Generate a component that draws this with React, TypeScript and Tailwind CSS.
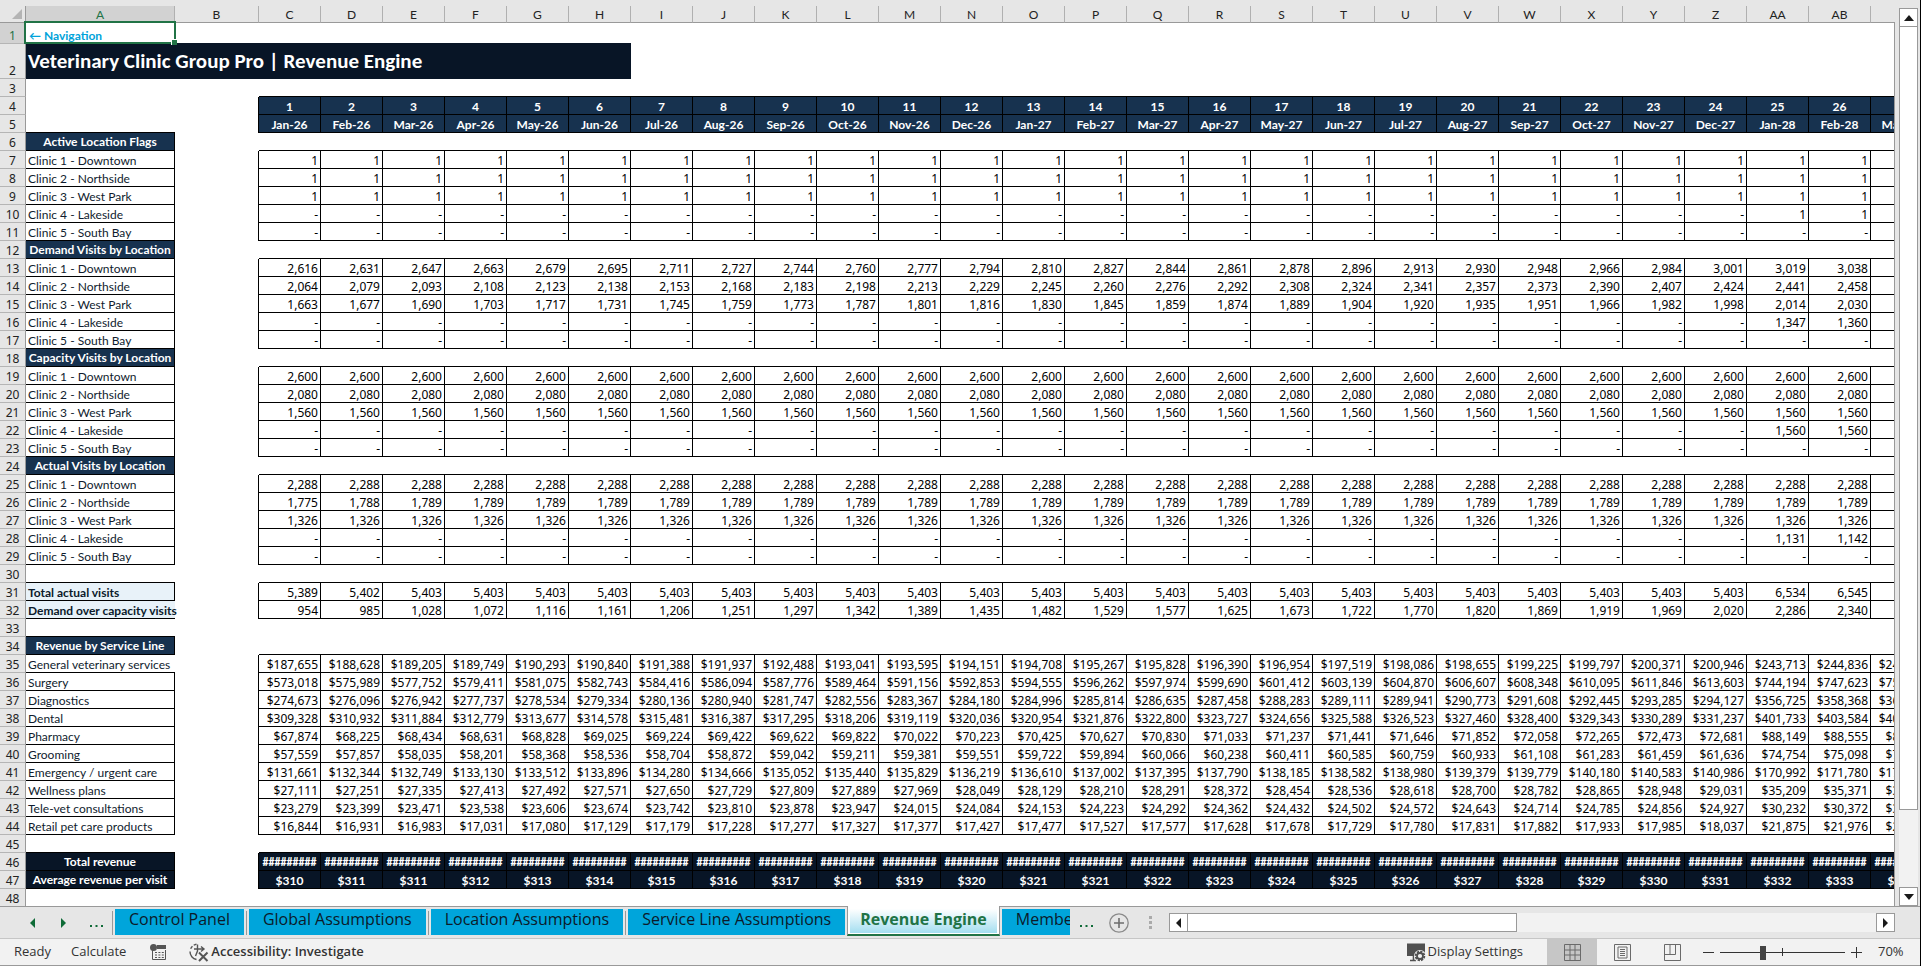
import React, { useState } from "react";

type LabelKind = "section" | "total" | "summary" | "plain";
type ValueKind = "header" | "number" | "hashes" | "average";

interface SheetRow {
  label?: string;
  labelKind?: LabelKind;
  spill?: boolean; // label runs over into column B
  values?: string[];
  valueKind?: ValueKind;
}

const COLUMNS =
  "C D E F G H I J K L M N O P Q R S T U V W X Y Z AA AB AC".split(" ");
const MONTHS = "Jan Feb Mar Apr May Jun Jul Aug Sep Oct Nov Dec".split(" ");

const list = (text: string) => text.trim().split(/\s+/);
const usd = (text: string) => list(text).map((v) => `$${v}`);
const fill = (value: string, count = 27) => Array<string>(count).fill(value);
const lateStart = (a: string, b: string, c: string) => [...fill("-", 24), a, b, c];

const clinics = (rows: string[][]): SheetRow[] =>
  ["Downtown", "Northside", "West Park", "Lakeside", "South Bay"].map(
    (name, i) => ({
      label: `Clinic ${i + 1} - ${name}`,
      labelKind: "plain",
      values: rows[i],
      valueKind: "number",
    })
  );

const section = (label: string): SheetRow => ({ label, labelKind: "section" });
const service = (label: string, values: string, spill = false): SheetRow => ({
  label,
  labelKind: "plain",
  spill,
  values: usd(values),
  valueKind: "number",
});

// Rows 3 and up, rows 1 and 2 are drawn by hand
const ROWS: SheetRow[] = [
  {},
  { values: COLUMNS.map((_, i) => String(i + 1)), valueKind: "header" },
  {
    values: COLUMNS.map((_, i) => `${MONTHS[i % 12]}-${26 + Math.floor(i / 12)}`),
    valueKind: "header",
  },
  section("Active Location Flags"),
  ...clinics([fill("1"), fill("1"), fill("1"), lateStart("1", "1", "1"), fill("-")]),
  section("Demand Visits by Location"),
  ...clinics([
    list(
      "2,616 2,631 2,647 2,663 2,679 2,695 2,711 2,727 2,744 2,760 2,777 2,794 2,810 2,827 2,844 2,861 2,878 2,896 2,913 2,930 2,948 2,966 2,984 3,001 3,019 3,038 3,056"
    ),
    list(
      "2,064 2,079 2,093 2,108 2,123 2,138 2,153 2,168 2,183 2,198 2,213 2,229 2,245 2,260 2,276 2,292 2,308 2,324 2,341 2,357 2,373 2,390 2,407 2,424 2,441 2,458 2,475"
    ),
    list(
      "1,663 1,677 1,690 1,703 1,717 1,731 1,745 1,759 1,773 1,787 1,801 1,816 1,830 1,845 1,859 1,874 1,889 1,904 1,920 1,935 1,951 1,966 1,982 1,998 2,014 2,030 2,047"
    ),
    lateStart("1,347", "1,360", "1,372"),
    fill("-"),
  ]),
  section("Capacity Visits by Location"),
  ...clinics([
    fill("2,600"),
    fill("2,080"),
    fill("1,560"),
    lateStart("1,560", "1,560", "1,560"),
    fill("-"),
  ]),
  section("Actual Visits by Location"),
  ...clinics([
    fill("2,288"),
    ["1,775", "1,788", ...fill("1,789", 25)],
    fill("1,326"),
    lateStart("1,131", "1,142", "1,153"),
    fill("-"),
  ]),
  {},
  {
    label: "Total actual visits",
    labelKind: "summary",
    values: ["5,389", "5,402", ...fill("5,403", 22), "6,534", "6,545", "6,556"],
    valueKind: "number",
  },
  {
    label: "Demand over capacity visits",
    labelKind: "summary",
    spill: true,
    values: list(
      "954 985 1,028 1,072 1,116 1,161 1,206 1,251 1,297 1,342 1,389 1,435 1,482 1,529 1,577 1,625 1,673 1,722 1,770 1,820 1,869 1,919 1,969 2,020 2,286 2,340 2,394"
    ),
    valueKind: "number",
  },
  {},
  section("Revenue by Service Line"),
  service(
    "General veterinary services",
    "187,655 188,628 189,205 189,749 190,293 190,840 191,388 191,937 192,488 193,041 193,595 194,151 194,708 195,267 195,828 196,390 196,954 197,519 198,086 198,655 199,225 199,797 200,371 200,946 243,713 244,836 245,965",
    true
  ),
  service(
    "Surgery",
    "573,018 575,989 577,752 579,411 581,075 582,743 584,416 586,094 587,776 589,464 591,156 592,853 594,555 596,262 597,974 599,690 601,412 603,139 604,870 606,607 608,348 610,095 611,846 613,603 744,194 747,623 751,068"
  ),
  service(
    "Diagnostics",
    "274,673 276,096 276,942 277,737 278,534 279,334 280,136 280,940 281,747 282,556 283,367 284,180 284,996 285,814 286,635 287,458 288,283 289,111 289,941 290,773 291,608 292,445 293,285 294,127 356,725 358,368 360,019"
  ),
  service(
    "Dental",
    "309,328 310,932 311,884 312,779 313,677 314,578 315,481 316,387 317,295 318,206 319,119 320,036 320,954 321,876 322,800 323,727 324,656 325,588 326,523 327,460 328,400 329,343 330,289 331,237 401,733 403,584 405,444"
  ),
  service(
    "Pharmacy",
    "67,874 68,225 68,434 68,631 68,828 69,025 69,224 69,422 69,622 69,822 70,022 70,223 70,425 70,627 70,830 71,033 71,237 71,441 71,646 71,852 72,058 72,265 72,473 72,681 88,149 88,555 88,963"
  ),
  service(
    "Grooming",
    "57,559 57,857 58,035 58,201 58,368 58,536 58,704 58,872 59,042 59,211 59,381 59,551 59,722 59,894 60,066 60,238 60,411 60,585 60,759 60,933 61,108 61,283 61,459 61,636 74,754 75,098 75,444"
  ),
  service(
    "Emergency / urgent care",
    "131,661 132,344 132,749 133,130 133,512 133,896 134,280 134,666 135,052 135,440 135,829 136,219 136,610 137,002 137,395 137,790 138,185 138,582 138,980 139,379 139,779 140,180 140,583 140,986 170,992 171,780 172,572"
  ),
  service(
    "Wellness plans",
    "27,111 27,251 27,335 27,413 27,492 27,571 27,650 27,729 27,809 27,889 27,969 28,049 28,129 28,210 28,291 28,372 28,454 28,536 28,618 28,700 28,782 28,865 28,948 29,031 35,209 35,371 35,534"
  ),
  service(
    "Tele-vet consultations",
    "23,279 23,399 23,471 23,538 23,606 23,674 23,742 23,810 23,878 23,947 24,015 24,084 24,153 24,223 24,292 24,362 24,432 24,502 24,572 24,643 24,714 24,785 24,856 24,927 30,232 30,372 30,512"
  ),
  service(
    "Retail pet care products",
    "16,844 16,931 16,983 17,031 17,080 17,129 17,179 17,228 17,277 17,327 17,377 17,427 17,477 17,527 17,577 17,628 17,678 17,729 17,780 17,831 17,882 17,933 17,985 18,037 21,875 21,976 22,078"
  ),
  {},
  {
    label: "Total revenue",
    labelKind: "total",
    values: fill("#########"),
    valueKind: "hashes",
  },
  {
    label: "Average revenue per visit",
    labelKind: "total",
    values: usd(
      "310 311 311 312 313 314 315 316 317 318 319 320 321 321 322 323 324 325 326 327 328 329 330 331 332 333 335"
    ),
    valueKind: "average",
  },
  {},
];

const labelClass: Record<LabelKind, string> = {
  section: "bg-[#17324f] pt-px pb-px text-center font-bold text-white",
  total: "bg-[#081526] pt-px pb-px text-center font-bold text-white",
  summary: "bg-[#e8f2f9] px-0.5 pt-0.5 font-bold text-[#0b1a2b]",
  plain: "px-0.5 pt-0.5 text-[#0f1c2e]",
};

const valueClass: Record<ValueKind, string> = {
  header: "bg-[#17324f] pt-0.5 text-center font-bold text-white",
  number:
    "px-0.5 pt-0.5 text-right font-['Noto_Sans','Open_Sans',sans-serif] text-black",
  hashes:
    "bg-[#081526] pt-0.5 text-center font-[Carlito,Lato,sans-serif] font-bold text-white",
  average: "bg-[#081526] pt-0.5 text-center font-bold text-white",
};

const RowNumber = ({ n, active }: { n: number; active?: boolean }) => (
  <th
    scope="row"
    className={`border-r border-b border-r-[#999] border-b-[#b5b5b5] pt-0.5 text-center align-bottom font-['Noto_Sans','Open_Sans',sans-serif] font-normal ${
      active ? "bg-[#d2d2d2] text-[#217346]" : "bg-[#e6e6e6] text-[#222]"
    }`}
  >
    {n}
  </th>
);

const Sheet = () => (
  <table className="w-[1933px] table-fixed border-separate border-spacing-0 bg-white font-[Lato,Carlito,sans-serif] text-[12px] leading-[15px] whitespace-nowrap">
    <colgroup>
      <col className="w-[26px]" />
      <col className="w-[149px]" />
      <col className="w-[84px]" />
      {COLUMNS.map((c) => (
        <col key={c} className="w-[62px]" />
      ))}
    </colgroup>
    <thead>
      <tr className="h-[17px] bg-[#e6e6e6] text-[#222]">
        <td className="border-r border-b border-[#999] p-0">
          <svg viewBox="0 0 10 10" className="ml-auto mr-[3px] h-[10px] w-[10px]">
            <path d="M10 0V10H0Z" fill="#b4b4b4" />
          </svg>
        </td>
        <th
          scope="col"
          className="border-r border-b border-r-[#b0b0b0] border-b-[#999] bg-[#d2d2d2] p-0 pt-px font-normal text-[#217346]"
        >
          A
        </th>
        {["B", ...COLUMNS].map((c) => (
          <th
            key={c}
            scope="col"
            className="border-r border-b border-r-[#b0b0b0] border-b-[#999] p-0 pt-px font-normal"
          >
            {c === "AC" ? "" : c}
          </th>
        ))}
      </tr>
    </thead>
    <tbody>
      <tr className="h-[21px]">
        <RowNumber n={1} active />
        <td className="relative border-b border-[#081526] px-[3px] pt-1 pb-0 align-bottom">
          <a href="#navigation" className="font-bold text-[#00a3da]">
            ← Navigation
          </a>
          <div className="absolute -top-0.5 -right-px -bottom-px -left-0.5 border-2 border-[#217346]" />
          <div className="absolute -right-0.5 -bottom-0.5 h-1.5 w-1.5 border-t border-l border-white bg-[#217346]" />
        </td>
        <td colSpan={7} className="border-b border-[#081526]" />
        <td colSpan={21} />
      </tr>
      <tr className="h-[35px]">
        <RowNumber n={2} />
        <td
          colSpan={8}
          className="bg-[#081526] px-0.5 pt-0 pb-0.5 text-left align-middle font-[Carlito,Lato,sans-serif] text-[21px] leading-[26px] font-bold text-white"
        >
          Veterinary Clinic Group Pro | Revenue Engine
        </td>
        <td colSpan={21} />
      </tr>
      {ROWS.map((row, i) => {
        const next = ROWS[i + 1] ?? {};
        return (
          <tr key={i} className="h-[18px]">
            <RowNumber n={i + 3} />
            <td
              className={`border-black ${
                row.label || next.label ? "border-b" : ""
              } ${row.label && !row.spill ? "border-r" : ""} ${
                row.labelKind ? labelClass[row.labelKind] : "p-0"
              }`}
            >
              {row.label}
            </td>
            <td className={row.values ? "border-r border-black p-0" : "p-0"} />
            {COLUMNS.map((c, j) => (
              <td
                key={c}
                className={`border-black ${
                  row.values || next.values ? "border-b" : ""
                } ${row.values ? "border-r" : ""} ${
                  row.valueKind ? valueClass[row.valueKind] : "p-0"
                }`}
              >
                {row.values?.[j]}
              </td>
            ))}
          </tr>
        );
      })}
    </tbody>
  </table>
);

const arrows = {
  up: "M6 3L11 9H1Z",
  down: "M1 3H11L6 9Z",
  left: "M9 1V11L4 6Z",
  right: "M3 1V11L8 6Z",
};

const Arrow = ({ dir, color }: { dir: keyof typeof arrows; color: string }) => (
  <svg viewBox="0 0 12 12" className="h-3 w-3">
    <path d={arrows[dir]} fill={color} />
  </svg>
);

const ScrollButton = ({ dir }: { dir: keyof typeof arrows }) => (
  <button
    aria-label={`Scroll ${dir}`}
    className="flex h-[19px] w-[19px] shrink-0 items-center justify-center border border-[#999] bg-white"
  >
    <Arrow dir={dir} color="#1a1a1a" />
  </button>
);

const TABS = [
  "Control Panel",
  "Global Assumptions",
  "Location Assumptions",
  "Service Line Assumptions",
  "Revenue Engine",
  "Membe",
];

const SheetTabs = () => {
  const [active, setActive] = useState("Revenue Engine");
  return (
    <nav className="flex h-8 shrink-0 bg-[#e6e6e6]">
      <div className="flex w-28 shrink-0 items-center border-t border-[#999] pl-[26px]">
        <button aria-label="Previous sheet" className="mr-5">
          <Arrow dir="left" color="#0e6b37" />
        </button>
        <button aria-label="Next sheet" className="mr-5">
          <Arrow dir="right" color="#0e6b37" />
        </button>
        <button aria-label="More sheets to the left">
          <Dots />
        </button>
      </div>
      {TABS.map((tab, i) =>
        tab === active ? (
          <button
            key={tab}
            className="flex h-[30px] shrink-0 flex-col border-x border-b-2 border-x-[#999] border-b-[#217346] bg-white px-0.5 pb-px text-[16px] font-bold text-[#217346]"
          >
            <span className="block h-[27px] bg-linear-to-b from-white from-10% to-[#a3def0] px-2.5 leading-[26px]">
              {tab}
            </span>
          </button>
        ) : (
          <div
            key={tab}
            className={`flex shrink-0 items-start border-t border-[#999] ${
              tab === "Membe" ? "w-[70px] overflow-hidden" : ""
            }`}
          >
            {TABS[i - 1] !== active && <span className="mt-1 h-6 w-px bg-[#999]" />}
            <button
              onClick={() => setActive(tab)}
              className="mx-0.5 mt-0.5 h-[26px] shrink-0 bg-[#00a5db] px-3.5 pb-1.5 text-[16px] leading-5 text-[#0c1a2a]"
            >
              {tab}
            </button>
          </div>
        )
      )}
      <div className="flex min-w-0 flex-1 items-center border-t border-[#999]">
        <button aria-label="More sheets to the right" className="mr-4 ml-2.5">
          <Dots />
        </button>
        <button aria-label="New sheet">
          <svg viewBox="0 0 20 20" className="h-5 w-5" fill="none">
            <circle cx="10" cy="10" r="9.2" stroke="#8a8a8a" strokeWidth="1.3" />
            <path d="M10 5V15M5 10H15" stroke="#6e6e6e" strokeWidth="1.6" />
          </svg>
        </button>
        <svg viewBox="0 0 3 13" className="mr-[17px] ml-5 h-[13px] w-[3px]" fill="#aaa">
          <path d="M0 0H3V3H0ZM0 5H3V8H0ZM0 10H3V13H0Z" />
        </svg>
        <ScrollButton dir="left" />
        <div className="flex h-[19px] min-w-0 flex-1 bg-[#f2f2f2]">
          <div className="-ml-px w-[48%] border border-[#999] bg-white" />
        </div>
        <ScrollButton dir="right" />
        <div className="w-[25px] shrink-0" />
      </div>
    </nav>
  );
};

const Dots = () => (
  <svg viewBox="0 0 13 12" className="h-3 w-[13px]" fill="#0e6b37">
    <path d="M0 8H2V10H0ZM5.5 8H7.5V10H5.5ZM11 8H13V10H11Z" />
  </svg>
);

const StatusBar = () => {
  const [zoom, setZoom] = useState(34);
  return (
    <footer className="flex h-7 shrink-0 items-center border-t border-b border-t-[#c6c6c6] border-b-[#999] bg-[#f2f2f2] text-[13px] text-[#333]">
      <span className="ml-3.5">Ready</span>
      <span className="ml-5">Calculate</span>
      <button aria-label="Record macro" className="ml-6">
        <svg viewBox="0 0 16 16" className="h-4 w-4">
          <path d="M2.5 6V15.5H15.5V6" fill="none" stroke="#555" />
          <path d="M7 1H16V5H7Z" fill="#555" />
          <circle cx="3.5" cy="3.5" r="3.5" fill="#555" />
          <path
            d="M5 8.5H14M5 11H14M5 13.5H14"
            stroke="#555"
            strokeDasharray="2 1.4"
          />
        </svg>
      </button>
      <button className="ml-[23px] flex items-center font-semibold">
        <svg
          viewBox="0 0 20 19"
          className="mr-0.5 h-[19px] w-5"
          fill="none"
          stroke="#555"
          strokeWidth="1.4"
        >
          <path d="M7.5 1.2A8 8 0 0 0 1.2 7" strokeDasharray="3 1.5" />
          <path d="M1 8.5A8 8 0 0 0 7.5 16.5" />
          <path d="M8.5 1.5V8L6.5 13M5 6H14.5M12 3.5L15 6L12 8.5" />
          <path d="M10 9.5L18.5 18M18.5 9.5L10 18" strokeWidth="2" />
        </svg>
        Accessibility: Investigate
      </button>
      <button className="ml-auto flex items-center">
        <svg viewBox="0 0 20 19" className="mr-0.5 h-[19px] w-5">
          <path d="M1 0.5H19V13H1Z" fill="#505050" />
          <path d="M4 17.5H10M7.5 13V17" stroke="#505050" strokeWidth="1.6" />
          <circle cx="14" cy="13" r="6" fill="#f2f2f2" />
          <circle
            cx="14"
            cy="13"
            r="4.4"
            fill="none"
            stroke="#505050"
            strokeWidth="1.8"
            strokeDasharray="2.3 1.1"
          />
          <circle cx="14" cy="13" r="3" fill="none" stroke="#505050" strokeWidth="1.8" />
        </svg>
        Display Settings
      </button>
      <button
        aria-label="Normal view"
        className="ml-6 flex h-full w-[50px] items-center justify-center bg-[#c6c6c6]"
      >
        <svg viewBox="0 0 17 17" className="h-[17px] w-[17px]" fill="none" stroke="#6a6a6a">
          <path d="M0.5 0.5H16.5V16.5H0.5ZM6 0.5V16.5M11 0.5V16.5M0.5 6H16.5M0.5 11H16.5" />
        </svg>
      </button>
      <button aria-label="Page layout" className="flex w-[50px] justify-center">
        <svg viewBox="0 0 17 17" className="h-[17px] w-[17px]" fill="none" stroke="#6a6a6a">
          <path d="M0.5 0.5H16.5V16.5H0.5ZM4 3H13V14H4ZM6 5.5H11M6 7.5H11M6 9.5H11M6 11.5H11" />
        </svg>
      </button>
      <button aria-label="Page break preview" className="flex w-[50px] justify-center">
        <svg viewBox="0 0 17 17" className="h-[17px] w-[17px]" fill="none" stroke="#6a6a6a">
          <path d="M0.5 0.5H16.5V16.5H0.5ZM0.5 10.5H11.5V0.5M6 0.5V10.5" />
        </svg>
      </button>
      <button aria-label="Zoom out" className="ml-1.5">
        <svg viewBox="0 0 11 11" className="h-[11px] w-[11px]" stroke="#333">
          <path d="M0 5.5H11" />
        </svg>
      </button>
      <div className="relative mx-1.5 flex h-4 w-[125px] items-center">
        <span className="absolute top-1 left-[62px] h-2 w-px bg-[#333]" />
        <input
          type="range"
          aria-label="Zoom"
          value={zoom}
          onChange={(e) => setZoom(Number(e.target.value))}
          className="relative h-4 w-full appearance-none bg-transparent [&::-webkit-slider-runnable-track]:h-px [&::-webkit-slider-runnable-track]:bg-[#333] [&::-webkit-slider-thumb]:-mt-1.5 [&::-webkit-slider-thumb]:h-3.5 [&::-webkit-slider-thumb]:w-1.5 [&::-webkit-slider-thumb]:appearance-none [&::-webkit-slider-thumb]:bg-[#444]"
        />
      </div>
      <button aria-label="Zoom in">
        <svg viewBox="0 0 11 11" className="h-[11px] w-[11px]" stroke="#333">
          <path d="M0 5.5H11M5.5 0V11" />
        </svg>
      </button>
      <span className="mr-[18px] ml-4 w-6">70%</span>
    </footer>
  );
};

const App: React.FC = () => {
  return (
    <div className="flex h-screen flex-col overflow-hidden border-r border-black bg-[#e6e6e6] font-['Open_Sans','Noto_Sans',sans-serif]">
      <div className="flex min-h-0 flex-1">
        <div className="min-w-0 flex-1 overflow-hidden pt-1.5">
          <Sheet />
        </div>
        <div className="mt-[22px] w-px bg-[#999]" />
        <div className="flex w-[25px] flex-col pt-2 pl-1">
          <ScrollButton dir="up" />
          <div className="-mt-px flex min-h-0 w-[19px] flex-1 flex-col bg-[#f2f2f2]">
            <div className="h-[91%] border border-[#999] bg-white" />
          </div>
          <ScrollButton dir="down" />
        </div>
      </div>
      <SheetTabs />
      <StatusBar />
    </div>
  );
};

export default App;
